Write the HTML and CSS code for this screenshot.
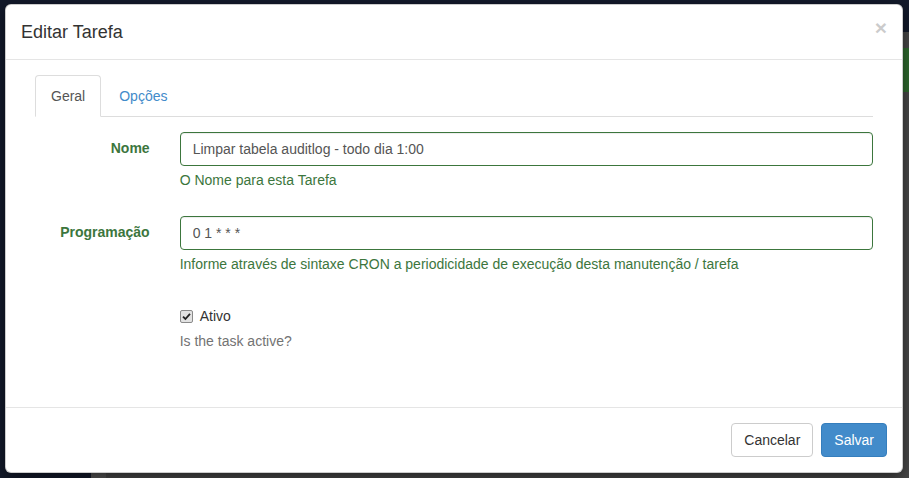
FILE: index.html
```html
<!DOCTYPE html>
<html lang="pt-BR">
<head>
  <meta charset="UTF-8" />
  <meta name="viewport" content="width=device-width, initial-scale=1.0" />
  <title>Editar Tarefa</title>
  <link rel="stylesheet" href="styles.css">
</head>
<body>
  <div class="page">
    <div class="sidebar"></div>
    <div class="main">
      <div class="navbar">
        <span class="logo"></span>
      </div>
      <div class="content">
        <div class="gutter"></div>
        <div class="area">
          <div class="green-btn"></div>
        </div>
      </div>
    </div>
  </div>

  <div class="modal">
    <div class="modal-content">
      <div class="modal-header">
        <button class="close" type="button">&times;</button>
        <h4 class="modal-title">Editar Tarefa</h4>
      </div>

      <div class="modal-body">
        <ul class="nav-tabs">
          <li class="active"><a href="#">Geral</a></li>
          <li><a href="#">Opções</a></li>
        </ul>

        <form class="tab-content">
          <div class="form-group has-success">
            <label class="control-label">Nome</label>
            <div class="field">
              <input class="form-control" type="text" value="Limpar tabela auditlog - todo dia 1:00">
              <span class="help-block">O Nome para esta Tarefa</span>
            </div>
          </div>

          <div class="form-group has-success">
            <label class="control-label">Programação</label>
            <div class="field">
              <input class="form-control" type="text" value="0 1 * * *">
              <span class="help-block">Informe através de sintaxe CRON a periodicidade de execução desta manutenção / tarefa</span>
            </div>
          </div>

          <div class="form-group">
            <div class="field offset">
              <div class="checkbox">
                <label>
                  <span class="check-box">
                    <svg width="9" height="9" viewBox="0 0 9 9"><path d="M1 4.6 L3.4 7 L8 1.8" fill="none" stroke="#222" stroke-width="1.8"/></svg>
                  </span>
                  Ativo
                </label>
              </div>
              <span class="help-block muted">Is the task active?</span>
            </div>
          </div>
        </form>
      </div>

      <div class="modal-footer">
        <button class="btn btn-default" type="button">Cancelar</button>
        <button class="btn btn-primary" type="button">Salvar</button>
      </div>
    </div>
  </div>
</body>
</html>
```

FILE: styles.css
```css
html, body {
  margin: 0;
  height: 100%;
}
body {
  font-family: "Liberation Sans", Arial, sans-serif;
  font-size: 14px;
  line-height: 1.42857;
  color: #333;
  background: #131a2b;
  overflow: hidden;
}

/* page behind the backdrop */
.page {
  display: flex;
  height: 100%;
}
.sidebar {
  width: 91px;
  background: #131a2b;
}
.main {
  flex: 1;
  display: flex;
  flex-direction: column;
}
.navbar {
  height: 32px;
  background: #131a2b;
  padding-left: 32px;
}
.logo {
  display: inline-block;
  width: 16px;
  height: 5px;
  background: #6b3a1c;
}
.content {
  flex: 1;
  display: flex;
}
.gutter {
  width: 15px;
  background: #565656;
}
.area {
  flex: 1;
  background: #484848;
  padding-top: 16px;
  display: flex;
  justify-content: flex-end;
  align-items: flex-start;
}
.green-btn {
  width: 40px;
  height: 44px;
  background: #2f6a2f;
}

/* modal */
.modal {
  position: absolute;
  left: 5px;
  top: 4px;
  width: 898px;
}
.modal-content {
  background: #fff;
  border: 1px solid rgba(0, 0, 0, 0.2);
  border-radius: 6px;
  box-shadow: 0 5px 15px rgba(0, 0, 0, 0.5);
}
.modal-header {
  padding: 15px;
  border-bottom: 1px solid #e5e5e5;
}
.modal-title {
  margin: 0;
  font-size: 18px;
  font-weight: normal;
  line-height: 24px;
}
.close {
  float: right;
  margin-top: -3px;
  padding: 0;
  background: none;
  border: 0;
  font-family: inherit;
  font-size: 21px;
  font-weight: bold;
  line-height: 1;
  color: #000;
  opacity: 0.2;
  cursor: pointer;
}
.modal-body {
  padding: 15px 29px 30px;
}
.modal-footer {
  padding: 15px;
  border-top: 1px solid #e5e5e5;
  display: flex;
  justify-content: flex-end;
  gap: 8px;
}

/* tabs */
.nav-tabs {
  list-style: none;
  margin: 0;
  padding: 0;
  display: flex;
  border-bottom: 1px solid #ddd;
}
.nav-tabs li {
  margin-bottom: -1px;
  margin-right: 2px;
}
.nav-tabs a {
  display: block;
  padding: 10px 15px;
  line-height: 20px;
  border: 1px solid transparent;
  border-radius: 4px 4px 0 0;
  color: #428bca;
  text-decoration: none;
}
.nav-tabs .active a {
  color: #555;
  background: #fff;
  border-color: #ddd #ddd transparent;
}

/* form */
.tab-content {
  padding-top: 15px;
}
.form-group {
  display: grid;
  grid-template-columns: calc((100% + 30px) / 6 - 30px) 1fr;
  column-gap: 30px;
  margin-bottom: 15px;
}
.control-label {
  padding-top: 7px;
  text-align: right;
  font-weight: bold;
}
.field.offset {
  grid-column: 2;
}
.form-control {
  display: block;
  width: 100%;
  height: 34px;
  box-sizing: border-box;
  padding: 6px 12px;
  font-family: inherit;
  font-size: 14px;
  color: #555;
  background: #fff;
  border: 1px solid #ccc;
  border-radius: 4px;
  box-shadow: inset 0 1px 1px rgba(0, 0, 0, 0.075);
  outline: none;
}
.help-block {
  display: block;
  margin: 5px 0 10px;
  color: #737373;
}
.has-success .control-label,
.has-success .help-block {
  color: #3c763d;
}
.has-success .form-control {
  border-color: #3c763d;
}
.checkbox {
  padding-top: 7px;
  min-height: 20px;
}
.checkbox label {
  display: flex;
  align-items: center;
  gap: 7px;
}
.check-box {
  width: 11px;
  height: 11px;
  border: 1px solid #8a8a8a;
  border-radius: 2px;
  background: #e2e2e2;
  display: flex;
  align-items: center;
  justify-content: center;
}

/* buttons */
.btn {
  height: 34px;
  padding: 6px 12px;
  font-family: inherit;
  font-size: 14px;
  line-height: 20px;
  border: 1px solid transparent;
  border-radius: 4px;
  cursor: pointer;
}
.btn-default {
  color: #333;
  background: #fff;
  border-color: #ccc;
}
.btn-primary {
  color: #fff;
  background: #428bca;
  border-color: #357ebd;
}
```
